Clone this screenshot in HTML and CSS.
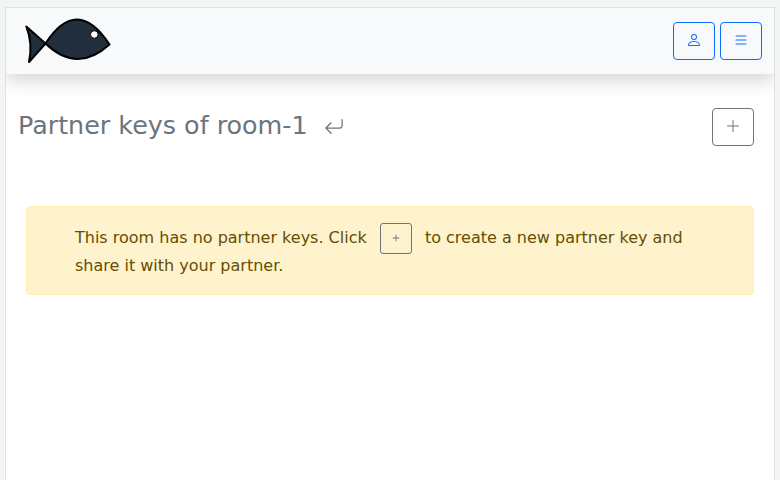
FILE: index.html
```html
<!DOCTYPE html>
<html lang="en">
<head>
<meta charset="utf-8">
<title>Partner keys</title>
<link rel="stylesheet" href="styles.css">
</head>
<body>
<div class="page">
  <header class="navbar">
    <svg class="logo" viewBox="0 0 88 48" width="88" height="48" aria-hidden="true">
      <path d="M21.500 26.500 Q53-22 85.500 27.500 Q53 57 21.500 26.500 L2.300 9.500 Q9 26 5 45 Z"/>
      <circle cx="70.300" cy="17.500" r="3.800"/>
    </svg>
    <nav class="actions">
      <button class="btn primary"><svg class="icon" viewBox="0 0 16 16"><path d="M8 8a3 3 0 1 0 0-6 3 3 0 0 0 0 6zm2-3a2 2 0 1 1-4 0 2 2 0 0 1 4 0zm4 8c0 1-1 1-1 1H3s-1 0-1-1 1-4 6-4 6 3 6 4zm-1-.004c-.001-.246-.154-.986-.832-1.664C11.516 10.680 10.289 10 8 10c-2.290 0-3.516.680-4.168 1.332-.678.678-.830 1.418-.832 1.664h10z"/></svg></button>
      <button class="btn primary"><svg class="icon" viewBox="0 0 16 16"><path fill-rule="evenodd" d="M2.500 12a.5.5 0 0 1 .5-.5h10a.5.5 0 0 1 0 1H3a.5.5 0 0 1-.5-.5zm0-4a.5.5 0 0 1 .5-.5h10a.5.5 0 0 1 0 1H3a.5.5 0 0 1-.5-.5zm0-4a.5.5 0 0 1 .5-.5h10a.5.5 0 0 1 0 1H3a.5.5 0 0 1-.5-.5z"/></svg></button>
    </nav>
  </header>
  <main>
    <div class="heading">
      <h3>Partner keys of room-1</h3>
      <svg class="back" viewBox="0 0 16 16"><path fill-rule="evenodd" d="M14.500 1.500a.5.5 0 0 1 .5.5v4.800a2.500 2.500 0 0 1-2.500 2.500H2.707l3.347 3.346a.5.5 0 0 1-.708.708l-4.200-4.200a.5.5 0 0 1 0-.708l4-4a.5.5 0 1 1 .708.708L2.707 8.300H12.500A1.500 1.500 0 0 0 14 6.800V2a.5.5 0 0 1 .5-.5z"/></svg>
      <button class="btn secondary add"><svg class="icon" viewBox="0 0 16 16"><path fill-rule="evenodd" d="M8 2a.5.5 0 0 1 .5.5v5h5a.5.5 0 0 1 0 1h-5v5a.5.5 0 0 1-1 0v-5h-5a.5.5 0 0 1 0-1h5v-5A.5.5 0 0 1 8 2z"/></svg></button>
    </div>
    <div class="alert">This room has no partner keys. Click <button class="btn secondary small"><svg class="icon" viewBox="0 0 16 16"><path d="M8 4a.5.5 0 0 1 .5.5v3h3a.5.5 0 0 1 0 1h-3v3a.5.5 0 0 1-1 0v-3h-3a.5.5 0 0 1 0-1h3v-3A.5.5 0 0 1 8 4z"/></svg></button> to create a new partner key and share it with your partner.</div>
  </main>
</div>
</body>
</html>
```
FILE: styles.css
```css
* { box-sizing: border-box; }
html { height: 100%; }
body {
  margin: 0;
  height: 100%;
  padding: 7px 5px 0;
  overflow: hidden;
  background: #f3f5f4;
  font: 16px/1.5 "DejaVu Sans", sans-serif;
  color: #212529;
}
.page {
  height: 100%;
  border: 1px solid #dee2e6;
  border-bottom: 0;
  background: #fff;
  overflow: hidden;
}
.navbar {
  display: flex;
  align-items: center;
  justify-content: space-between;
  height: 66px;
  padding: 0 12px 0 18px;
  background: #f8f9fa;
  box-shadow: 0 8px 16px rgba(0, 0, 0, .15);
}
.logo { overflow: visible; }
.logo path {
  fill: #212f3d;
  stroke: #000;
  stroke-width: 2;
  stroke-linejoin: round;
}
.logo circle { fill: #fff; stroke: #000; stroke-width: 1; }
.actions { display: flex; gap: 5px; }
.btn {
  display: inline-block;
  padding: 6px 12px;
  border: 1px solid;
  border-radius: 4px;
  background: transparent;
  font: inherit;
}
.primary { color: #0d6efd; }
.secondary { color: #6c757d; }
.icon {
  width: 1em;
  height: 1em;
  fill: currentColor;
  vertical-align: -.125em;
}
.heading {
  display: flex;
  align-items: center;
  margin-top: 34px;
  padding: 0 20px 0 12px;
  color: #6c757d;
}
h3 {
  margin: 0 16px 4px 0;
  font-size: 25.4px;
  font-weight: 500;
  line-height: 1.2;
}
.back { width: 20px; height: 20px; fill: currentColor; }
.add { margin-left: auto; }
.alert {
  margin: 60px 20px 0;
  padding: 16px 48px;
  border: 1px solid #ffecb5;
  border-radius: 4px;
  background: #fff3cd;
  color: #664d03;
}
.small {
  margin: 0 8px;
  padding: 4px 8px;
  border-radius: 3px;
  font-size: 14px;
}
```
